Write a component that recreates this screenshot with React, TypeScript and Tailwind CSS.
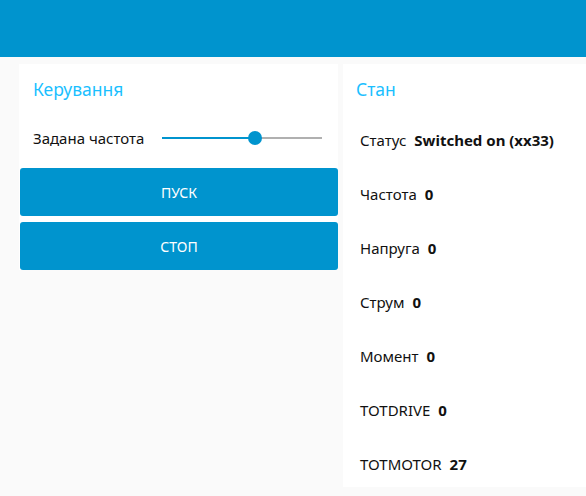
import React from "react";

const font = { fontFamily: '"Noto Sans", "Open Sans", sans-serif' };

const rows: { label: string; value: string }[] = [
  { label: "Статус", value: "Switched on (xx33)" },
  { label: "Частота", value: "0" },
  { label: "Напруга", value: "0" },
  { label: "Струм", value: "0" },
  { label: "Момент", value: "0" },
  { label: "TOTDRIVE", value: "0" },
  { label: "TOTMOTOR", value: "27" },
];

const Slider = ({ percent }: { percent: number }) => (
  <div className="relative h-[2px] w-[160px] bg-[#b0b0b0]">
    <div className="absolute left-0 top-0 h-[2px] bg-[#0094ce]" style={{ width: `${percent}%` }} />
    <div
      className="absolute top-[-6px] h-[14px] w-[14px] -translate-x-1/2 rounded-full bg-[#0094ce]"
      style={{ left: `${percent}%` }}
    />
  </div>
);

export default function App() {
  return (
    <div className="h-[496px] w-[586px] overflow-hidden bg-[#fafafa]" style={font}>
      <div className="h-[57px] bg-[#0094ce]" />
      <div className="flex items-start gap-[5px] pl-[19px] pt-[7px]">
        <div className="w-[319px] shrink-0 bg-white">
          <div className="flex h-[50px] items-center pl-[14px] text-[17.5px] text-[#1bbfff]">Керування</div>
          <div className="flex h-[48px] items-center pl-[14px]">
            <span className="w-[129px] text-[15px] text-[#111]">Задана частота</span>
            <Slider percent={58} />
          </div>
          <div className="mt-[6px] flex flex-col gap-[6px] pl-px">
            <button className="flex h-[48px] items-center justify-center rounded-[3px] bg-[#0094ce] text-[14px] text-white">
              ПУСК
            </button>
            <button className="flex h-[48px] items-center justify-center rounded-[3px] bg-[#0094ce] text-[14px] text-white">
              СТОП
            </button>
          </div>
        </div>
        <div className="h-[423px] w-[320px] shrink-0 bg-white">
          <div className="flex h-[50px] items-center pl-[13px] text-[17.5px] text-[#1bbfff]">Стан</div>
          <div className="flex flex-col gap-[6px] pt-[2px]">
            {rows.map((r) => (
              <div key={r.label} className="flex h-[48px] items-center gap-[8px] pl-[17px] text-[15px] text-[#111]">
                <span>{r.label}</span>
                <span className="font-bold">{r.value}</span>
              </div>
            ))}
          </div>
        </div>
      </div>
    </div>
  );
}
